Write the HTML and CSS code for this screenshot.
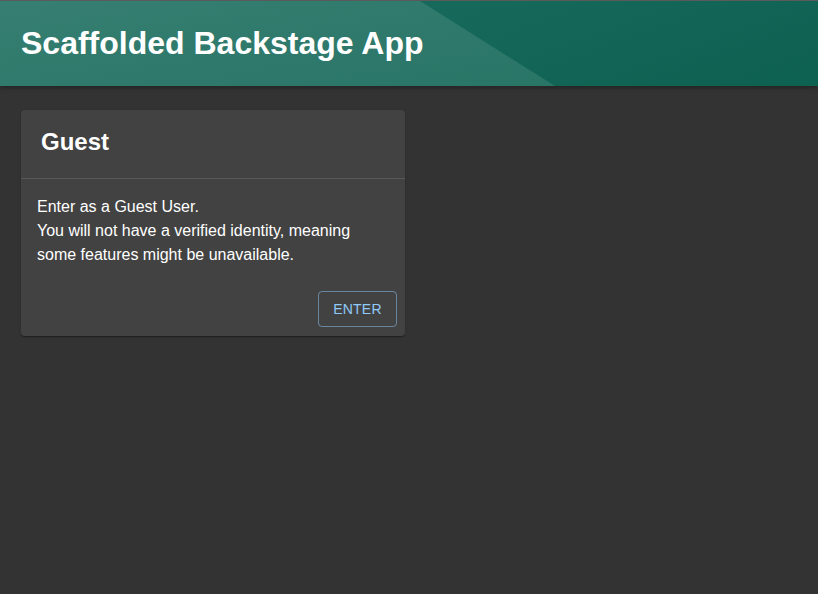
FILE: index.html
```html
<!DOCTYPE html>
<html>
<head>
<meta charset="utf-8">
<link rel="stylesheet" href="styles.css">
</head>
<body>
<header class="header">
  <div class="header-shape"></div>
  <h1 class="header-title">Scaffolded Backstage App</h1>
</header>
<main class="content">
  <section class="card">
    <div class="card-header"><h2 class="card-title">Guest</h2></div>
    <div class="card-body">
      <p>Enter as a Guest User.<br>You will not have a verified identity, meaning some features might be unavailable.</p>
    </div>
    <div class="card-actions">
      <button class="btn-outline">Enter</button>
    </div>
  </section>
</main>
</body>
</html>
```
FILE: styles.css
```css
html, body { margin: 0; padding: 0; }
body {
  background: #333333;
  font-family: "Liberation Sans", Arial, sans-serif;
  color: #fff;
  width: 818px;
  height: 594px;
  overflow: hidden;
}
.header {
  position: relative;
  height: 85px;
  border-top: 1px solid #5a5a5a;
  background: linear-gradient(160deg, #1e7062 0%, #0d6151 100%);
  box-shadow: 0 2px 4px rgba(0,0,0,0.3);
  display: flex;
  align-items: center;
  padding: 0 21px;
  overflow: hidden;
}
.header-shape {
  position: absolute;
  inset: 0;
  background: linear-gradient(170deg, #367f72 0%, #257263 100%);
  clip-path: polygon(0 0, 420px 0, 555px 100%, 0 100%);
}
.header-title {
  position: relative;
  margin: -2px 0 0 0;
  font-size: 32px;
  font-weight: 700;
  line-height: 1;
  color: #fff;
}
.content { padding: 24px 21px; }
.card {
  width: 384px;
  background: #424242;
  border-radius: 4px;
  box-shadow: 0 2px 1px -1px rgba(0,0,0,0.2), 0 1px 1px 0 rgba(0,0,0,0.14), 0 1px 3px 0 rgba(0,0,0,0.12);
}
.card-header {
  height: 68px;
  border-bottom: 1px solid #595959;
  display: flex;
  align-items: center;
  padding: 0 20px;
}
.card-title {
  margin: -4px 0 0 0;
  font-size: 24px;
  font-weight: 700;
}
.card-body { padding: 16px 16px 0; }
.card-body p {
  margin: 0;
  font-size: 16px;
  line-height: 24px;
}
.card-actions {
  display: flex;
  justify-content: flex-end;
  padding: 24px 8px 9px;
}
.btn-outline {
  width: 79px;
  height: 36px;
  background: transparent;
  border: 1px solid rgba(144,202,249,0.5);
  border-radius: 4px;
  color: #90caf9;
  font-family: "Liberation Sans", Arial, sans-serif;
  font-size: 14px;
  text-transform: uppercase;
  letter-spacing: 0.2px;
}
```
